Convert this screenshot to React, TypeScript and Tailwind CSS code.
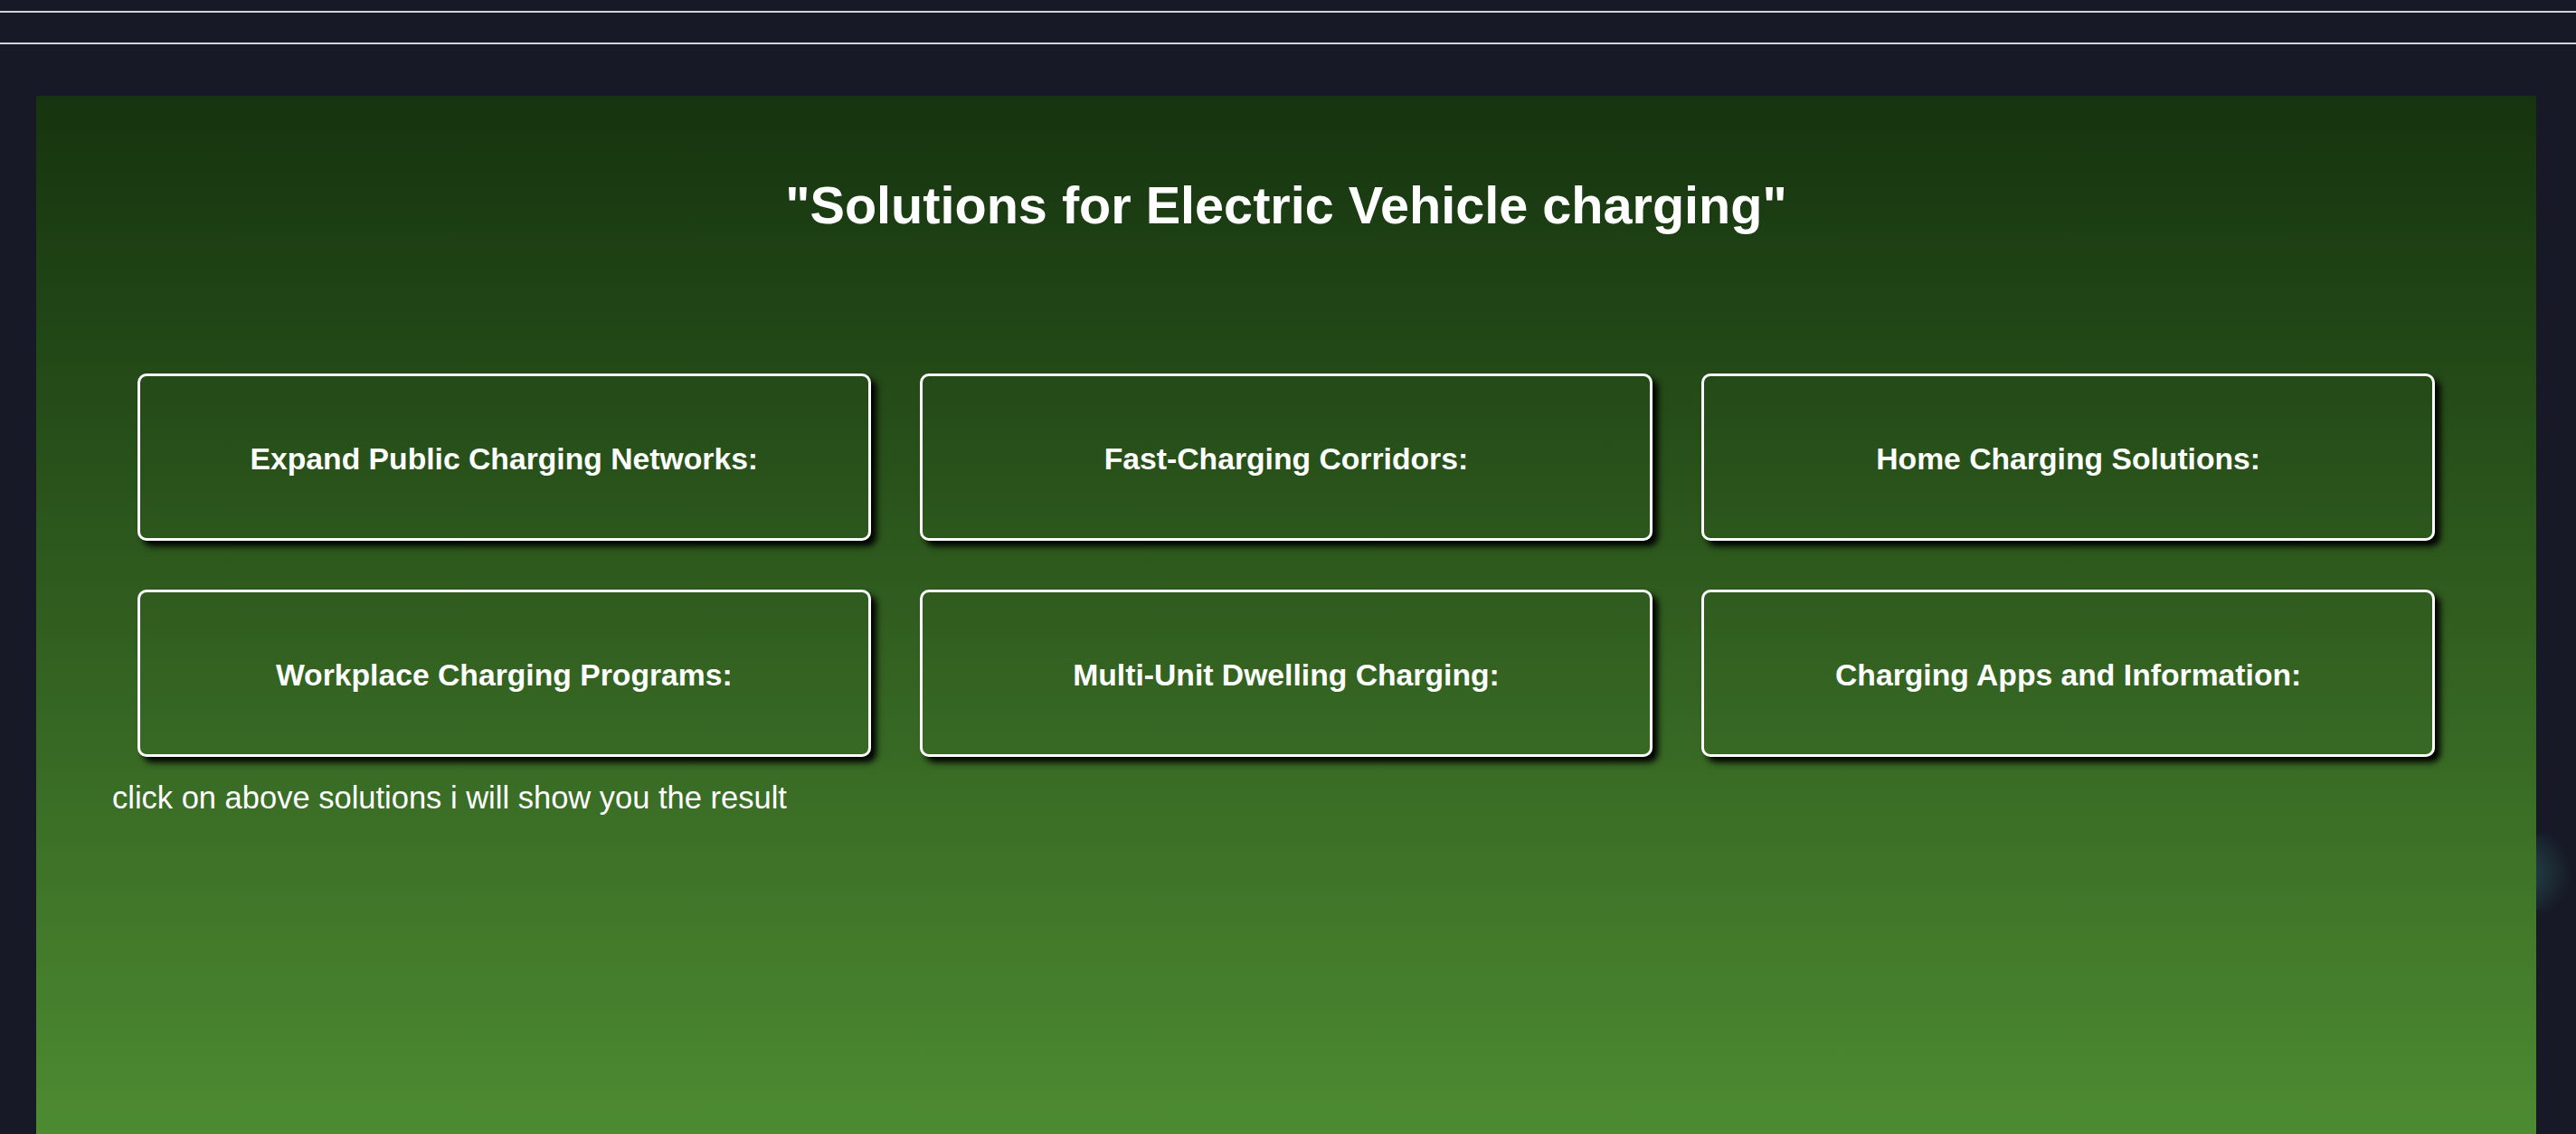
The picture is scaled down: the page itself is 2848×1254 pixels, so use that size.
const solutions = [
  "Expand Public Charging Networks:",
  "Fast-Charging Corridors:",
  "Home Charging Solutions:",
  "Workplace Charging Programs:",
  "Multi-Unit Dwelling Charging:",
  "Charging Apps and Information:",
];

const App = () => {
  return (
    <div className="relative min-h-screen overflow-hidden bg-[#171a26] pt-[12px] font-['Liberation_Sans',Arial,sans-serif] text-white">
      <nav className="h-[37px] border-y-2 border-[#d4d4d8]"></nav>

      <div className="pointer-events-none absolute left-[2790px] top-[920px] h-[90px] w-[60px] rounded-full bg-[radial-gradient(circle_at_left,rgba(60,150,140,0.35),rgba(23,26,38,0)_70%)]"></div>

      <section className="relative ml-[40px] mr-[44px] mt-[57px] h-[1148px] bg-linear-to-b from-[#16340f] to-[#4d8b31] px-[84px] pt-[89px]">
        <h1 className="text-center text-[57.6px] font-bold leading-[1.117]">
          "Solutions for Electric Vehicle charging"
        </h1>

        <div className="mx-[28px] mt-[154px] grid grid-cols-3 gap-[54px]">
          {solutions.map((s) => (
            <button
              key={s}
              type="button"
              className="flex h-[185px] items-center justify-center rounded-[10px] border-[3px] border-white pt-[2px] text-[33.7px] font-bold text-white shadow-[6px_6px_7px_#000]"
            >
              {s}
            </button>
          ))}
        </div>

        <p className="mt-[26px] text-[34.5px] leading-[1.15]">
          click on above solutions i will show you the result
        </p>
      </section>
    </div>
  );
};

export default App;
